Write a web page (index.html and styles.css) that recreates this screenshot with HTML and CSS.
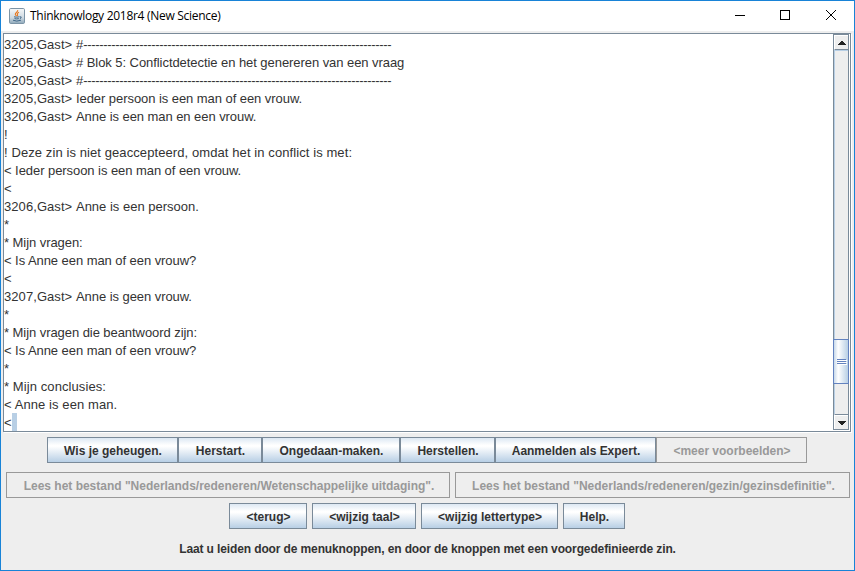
FILE: index.html
```html
<!DOCTYPE html>
<html lang="nl">
<head>
<meta charset="utf-8">
<title>Thinknowlogy 2018r4 (New Science)</title>
<link rel="stylesheet" href="styles.css">
</head>
<body>
<div class="window">
  <header class="titlebar">
    <svg class="app-icon" width="16" height="16" viewBox="0 0 16 16">
      <defs>
        <linearGradient id="tile" x1="0" y1="0" x2="0" y2="1"><stop offset="0" stop-color="#f6f8f9"/><stop offset=".6" stop-color="#cfdae2"/><stop offset="1" stop-color="#8fa9bb"/></linearGradient>
      </defs>
      <rect x=".5" y=".5" width="15" height="15" rx="1.2" fill="url(#tile)" stroke="#7c94a6"/>
      <path d="M8.700 2.200C9.200 4 6 4.800 6.300 6.300Q6.500 7.200 7.700 8.200M10 4.300Q7.600 5.500 8.500 6.600Q9 7.300 8.100 8" fill="none" stroke="#e8781e" stroke-width="1.100"/>
      <path d="M5 8.800Q7.500 9.600 10.300 8.800M5.500 10.600Q7.700 11.200 9.800 10.600M10.600 8.800Q13.200 8.400 11.800 10.200L10.800 10.900M4 12.200Q7.500 14 12 12.200" fill="none" stroke="#42698a" stroke-width="1"/>
    </svg>
    <h1 class="title">Thinknowlogy 2018r4 (New Science)</h1>
    <svg class="controls" width="104" height="12" viewBox="0 0 104 12" fill="none" stroke="#000" shape-rendering="crispEdges">
      <path d="M0 5.500H10M45.500 .5H54.500V9.500H45.500Z"/>
      <path d="M91 0L101 10M101 0L91 10" shape-rendering="auto"/>
    </svg>
  </header>
  <main class="console">
    <div class="output">
      <p><span class="prompt">3205,Gast&gt; </span>#<span class="dashes">-----------------------------------------------------------------------------</span></p>
      <p class="snug"><span class="prompt">3205,Gast&gt; </span># Blok 5: Conflictdetectie en het genereren van een vraag</p>
      <p><span class="prompt">3205,Gast&gt; </span>#<span class="dashes">-----------------------------------------------------------------------------</span></p>
      <p class="snug"><span class="prompt">3205,Gast&gt; </span>Ieder persoon is een man of een vrouw.</p>
      <p class="snug"><span class="prompt">3206,Gast&gt; </span>Anne is een man en een vrouw.</p>
      <p>!</p>
      <p class="loose">! Deze zin is niet geaccepteerd, omdat het in conflict is met:</p>
      <p class="snug">&lt; Ieder persoon is een man of een vrouw.</p>
      <p>&lt;</p>
      <p><span class="prompt">3206,Gast&gt; </span>Anne is een persoon.</p>
      <p>*</p>
      <p class="snug">* Mijn vragen:</p>
      <p class="snug">&lt; Is Anne een man of een vrouw?</p>
      <p>&lt;</p>
      <p class="snug"><span class="prompt">3207,Gast&gt; </span>Anne is geen vrouw.</p>
      <p>*</p>
      <p class="snug">* Mijn vragen die beantwoord zijn:</p>
      <p class="snug">&lt; Is Anne een man of een vrouw?</p>
      <p>*</p>
      <p class="loose">* Mijn conclusies:</p>
      <p class="loose">&lt; Anne is een man.</p>
      <p>&lt;<span class="selection"></span></p>
    </div>
    <div class="scrollbar">
      <div class="arrow up"><svg width="8" height="4" viewBox="0 0 8 4" shape-rendering="crispEdges"><path d="M3 0H5V1H6V2H7V3H8V4H0V3H1V2H2V1H3Z" fill="#222"/></svg></div>
      <div class="track"><div class="thumb"><i></i><i></i><i></i></div></div>
      <div class="arrow down"><svg width="8" height="4" viewBox="0 0 8 4" shape-rendering="crispEdges"><path d="M0 0H8V1H7V2H6V3H5V4H3V3H2V2H1V1H0Z" fill="#222"/></svg></div>
    </div>
  </main>
  <nav class="row joined">
    <button class="w131">Wis je geheugen.</button><button class="w84">Herstart.</button><button class="w138">Ongedaan-maken.</button><button class="w95">Herstellen.</button><button class="w161">Aanmelden als Expert.</button><button class="w151" disabled>&lt;meer voorbeelden&gt;</button>
  </nav>
  <nav class="row files">
    <button class="w444" disabled>Lees het bestand "Nederlands/redeneren/Wetenschappelijke uitdaging".</button>
    <button class="w395" disabled>Lees het bestand "Nederlands/redeneren/gezin/gezinsdefinitie".</button>
  </nav>
  <nav class="row menu">
    <button class="w78">&lt;terug&gt;</button>
    <button class="w104">&lt;wijzig taal&gt;</button>
    <button class="w137">&lt;wijzig lettertype&gt;</button>
    <button class="w62">Help.</button>
  </nav>
  <footer class="status">Laat u leiden door de menuknoppen, en door de knoppen met een voorgedefinieerde zin.</footer>
</div>
</body>
</html>
```
FILE: styles.css
```css
* { box-sizing: border-box; }
body { margin: 0; }
.window {
  width: 855px; height: 571px; border: 1px solid #1883d7; background: #eee;
  font-family: "Liberation Sans", Arial, sans-serif; color: #333; overflow: hidden;
}
.titlebar { display: flex; align-items: center; height: 30px; background: #fff; padding: 0 15px 0 8px; }
.app-icon { margin-top: -1px; }
.title { margin: 0 auto 0 5px; font: 12px/16px "Open Sans", "Noto Sans", sans-serif; letter-spacing: -.29px; color: #000; }
.controls { margin-top: -1px; }
.console {
  display: flex; width: 848px; height: 399px; margin: 2px 0 0 2px; background: #fff;
  border: 1px solid #7a8a99; box-shadow: 1px 1px 0 #fff;
}
.output { flex: 1; padding-top: 1px; }
.output p { margin: 0; height: 18px; font-size: 13px; line-height: 20px; white-space: pre; }
.output .snug { letter-spacing: -.06px; }
.output .loose { letter-spacing: .09px; }
.output .prompt { letter-spacing: .07px; }
.dashes { letter-spacing: -.33px; }
.selection { display: inline-block; width: 5px; height: 18px; background: #b8cfe5; vertical-align: top; }
.scrollbar {
  display: flex; flex-direction: column; width: 16px; margin: 0 1px 1px 0;
  border: 1px solid #7a8a99; background: #eee;
}
.arrow { display: flex; align-items: center; justify-content: center; height: 15px; border-left: 1px solid #fff; }
.up { border-top: 1px solid #fff; border-bottom: 1px solid #7a8a99; }
.down { height: 15px; padding-top: 1px; border-top: 1px solid #7a8a99; box-shadow: inset 0 1px 0 #fff; }
.track { flex: 1; padding-top: 289px; box-shadow: inset 1px 1px 0 #b8cfe5; }
.thumb {
  display: flex; flex-direction: column; align-items: center; justify-content: center; gap: 1px; height: 45px;
  margin: 0 -1px; border: 1px solid #6382bf;
  background: linear-gradient(90deg, #c8d9ea, #fff 30%, #b8cfe5);
}
.thumb i { width: 9px; height: 1px; background: #6382bf; box-shadow: 1px 1px 0 #fff; }
.row { display: flex; justify-content: center; gap: 5px; height: 26px; padding-right: 2px; }
.joined { gap: 0; margin-top: 5px; }
.files { margin-top: 9px; padding-left: 3px; }
.menu { margin-top: 5px; }
button {
  flex: none; height: 26px; padding: 1px 0 0 2px; border: 1px solid #7a8a99; color: #333;
  background: linear-gradient(#dde8f3, #fff 30%, #fff 35%, #b8cfe5);
  font: bold 12px/24px "Liberation Sans", Arial, sans-serif; letter-spacing: -.01px; white-space: nowrap;
}
button:disabled { background: #eee; border-color: #999; color: #999; }
.w131 { width: 131px; } .w84 { width: 84px; } .w138 { width: 138px; } .w95 { width: 95px; }
.w161 { width: 161px; } .w151 { width: 151px; } .w444 { width: 444px; } .w395 { width: 395px; }
.w78 { width: 78px; } .w104 { width: 104px; } .w137 { width: 137px; } .w62 { width: 62px; }
.status { margin-top: 12px; text-align: center; font-weight: bold; font-size: 12px; line-height: 16px; letter-spacing: -.12px; }
```
